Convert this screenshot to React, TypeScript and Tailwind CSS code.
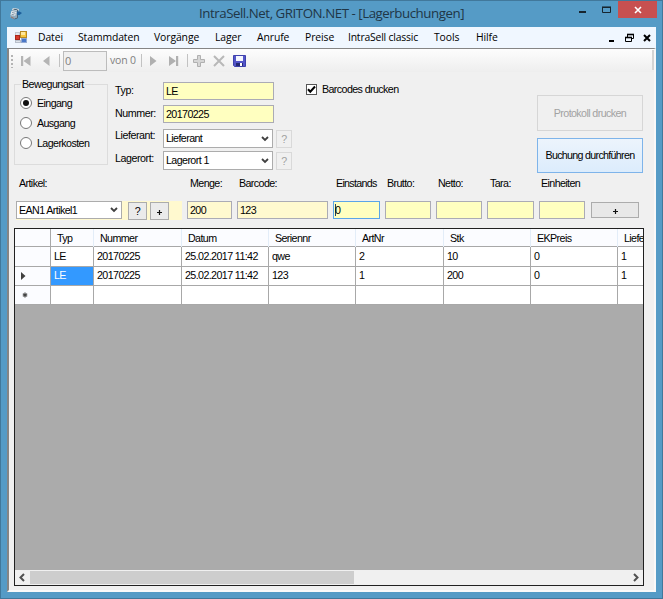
import type { ReactNode } from "react";

const MENU = [
  { label: "Datei", className: "w-[40px]" },
  { label: "Stammdaten", className: "w-[76px]" },
  { label: "Vorgänge", className: "w-[61px]" },
  { label: "Lager", className: "w-[42px]" },
  { label: "Anrufe", className: "w-[48px]" },
  { label: "Preise", className: "w-[43px]" },
  { label: "IntraSell classic", className: "w-[86px] tracking-[-0.2px]" },
  { label: "Tools", className: "w-[42px]" },
  { label: "Hilfe", className: "w-[40px]" },
];

const COLUMNS = ["Typ", "Nummer", "Datum", "Seriennr", "ArtNr", "Stk", "EKPreis", "Liefe"];

const ROWS = [
  ["LE", "20170225", "25.02.2017 11:42", "qwe", "2", "10", "0", "1"],
  ["LE", "20170225", "25.02.2017 11:42", "123", "1", "200", "0", "1"],
  ["", "", "", "", "", "", "", ""],
];

const GRID_COLS = "grid grid-cols-[36px_43px_88px_87px_87px_88px_87px_87px_26px]";

function AppIcon() {
  return (
    <svg width="14" height="14" viewBox="0 0 14 14" className="shrink-0">
      <path d="M4 2l6 1-1.500 9-4 1L1 11l1-5z" fill="#8fa9bb" />
      <path d="M4 2l6 1-1 2-6-1z" fill="#d9e2e8" />
      <path d="M2.500 5l5 1-1.500 4-4.500-1z" fill="#e9eef1" />
      <path d="M3 6.500l3.500.8M2.500 8.300l3 .7" stroke="#6b8294" strokeWidth="0.8" />
      <path d="M4.500 3.200l4 .6" stroke="#4c6375" strokeWidth="1" />
      <path d="M8.500 4v8l-3 1" fill="none" stroke="#4c6375" strokeWidth="1" />
      <path d="M8 5.500h2.500l2.500 1.500-2.500 2H8z" fill="#1e5f9a" />
      <path d="M2 11l3 1.500" stroke="#9c6f60" />
    </svg>
  );
}

function FormIcon() {
  return (
    <svg width="13" height="13" viewBox="0 0 13 13" className="shrink-0">
      <rect x="0.500" y="1.500" width="4" height="3" fill="#e3e6ec" stroke="#c3c8d2" />
      <rect x="5.500" y="0.500" width="6" height="6" fill="#f8c63c" stroke="#b98a20" />
      <rect x="6" y="1" width="4" height="3" fill="#ffe79b" />
      <rect x="0.500" y="4.500" width="4" height="4" fill="#d83b2c" stroke="#a9281c" />
      <rect x="6.500" y="7.500" width="5" height="4" fill="#4a78c8" stroke="#92a9d2" />
      <rect x="0.500" y="9.500" width="5" height="2" fill="#dfe3ea" stroke="#b7bfcb" />
    </svg>
  );
}

function Chevron() {
  return (
    <svg width="8" height="6" viewBox="0 0 8 6" className="shrink-0">
      <path d="M1 1l3 3 3-3" fill="none" stroke="#404040" strokeWidth="1.8" />
    </svg>
  );
}

function TitleBar() {
  return (
    <div className="flex h-[26px] shrink-0 items-start">
      <div className="w-[198px] pt-[5px] pl-[8px]">
        <AppIcon />
      </div>
      <div className="w-[370px] pt-[3px] font-['Open_Sans','Noto_Sans',sans-serif] text-[13.3px] leading-[19px] tracking-[-0.46px] whitespace-nowrap text-[#203646]">
        IntraSell.Net, GRITON.NET - [Lagerbuchungen]
      </div>
      <svg width="49" height="18" viewBox="0 0 49 18" className="shrink-0">
        <path d="M10 11h7" stroke="#17252f" strokeWidth="2" />
        <path d="M33.500 6.500h8v5h-8z" fill="none" stroke="#17252f" />
        <path d="M33 6.200h9" stroke="#17252f" strokeWidth="1.5" />
      </svg>
      <div className="flex h-[17px] w-[39px] items-center justify-center bg-[#c75050]">
        <svg width="8" height="8" viewBox="0 0 8 8">
          <path d="M1 1l6 6M7 1l-6 6" stroke="#fff" strokeWidth="1.6" />
        </svg>
      </div>
    </div>
  );
}

function MenuBar() {
  return (
    <div className="flex h-[21px] shrink-0 items-center bg-[#f0f7ff] pl-[8px] font-['Open_Sans','Noto_Sans',sans-serif] text-[10.4px] leading-[16px] tracking-[-0.1px] whitespace-nowrap text-black">
      <FormIcon />
      <div className="w-[10px]" />
      {MENU.map((item) => (
        <span key={item.label} className={`pb-[1px] ${item.className}`}>
          {item.label}
        </span>
      ))}
      <svg width="44" height="12" viewBox="0 0 44 12" className="ml-auto mr-[4px]">
        <path d="M1 9h5" stroke="#000" strokeWidth="2" />
        <path d="M19.500 5V2.500h6v4H24" fill="none" stroke="#000" />
        <path d="M19 2.500h7" stroke="#000" strokeWidth="1.600" />
        <path d="M17.500 5.500h6v4h-6z" fill="#f0f7ff" stroke="#000" />
        <path d="M17 5.500h7" stroke="#000" strokeWidth="1.600" />
        <path d="M36 3l6 6M42 3l-6 6" stroke="#000" strokeWidth="2" />
      </svg>
    </div>
  );
}

function Separator() {
  return <div className="h-[13px] w-px shrink-0 bg-[#c2c2c2]" />;
}

function Toolbar() {
  return (
    <div className="flex h-[23px] shrink-0 items-center bg-gradient-to-b from-[#fdfdfd] to-[#eeeeee] pl-[2px] font-['Open_Sans','Noto_Sans',sans-serif] text-[11px] text-[#808080]">
      <svg width="3" height="14" viewBox="0 0 3 14" className="shrink-0">
        <path d="M1 1v13" stroke="#b4b4b4" strokeWidth="2" strokeDasharray="2 2" />
      </svg>
      <svg width="45" height="12" viewBox="0 0 45 12" className="shrink-0" fill="#b4b4b4">
        <path d="M7 1h2.200v10H7zM16.500 1v10L9.500 6zM35.500 1v10L29 6z" />
      </svg>
      <Separator />
      <div className="ml-[3px] h-[20px] w-[44px] shrink-0 border border-[#bcbcbc] bg-[#f0f0f0] pl-[1px] leading-[17px]">0</div>
      <span className="mr-[5px] ml-[3px] w-[26px] shrink-0 text-[10.5px] tracking-[-0.2px] whitespace-nowrap">von 0</span>
      <Separator />
      <svg width="45" height="12" viewBox="0 0 45 12" className="shrink-0" fill="#b0b0b0">
        <path d="M8 1v10L14.500 6zM27 1v10L34 6zM34 1h2.200v10H34z" />
      </svg>
      <Separator />
      <svg width="62" height="14" viewBox="0 0 62 14" className="ml-[1px] shrink-0">
        <path d="M8.500 1.500h3v4h4v3h-4v4h-3v-4h-4v-3h4z" fill="#d6d6d6" stroke="#b0b0b0" />
        <path d="M25 2l10 10M35 2L25 12" stroke="#b8b8b8" strokeWidth="2" />
        <path d="M44.500 1.500h12v11h-11l-1-1z" fill="#5355c8" stroke="#3e41ac" />
        <path d="M47 2h7v5h-7z" fill="#f4f6ff" />
        <path d="M47 9h7v3h-7z" fill="#252a72" />
        <path d="M51 9h2v3h-2z" fill="#fff" />
      </svg>
      <div className="mb-[2px] ml-auto h-[20px] w-[2px] bg-[#d4d4d4]" />
    </div>
  );
}

function Radio({ label, checked = false }: { label: string; checked?: boolean }) {
  return (
    <div className="flex h-[20px] items-center gap-[5px]">
      <div className="flex size-[12px] items-center justify-center rounded-full border border-[#777] bg-white">
        {checked && <div className="size-[6px] rounded-full bg-[#111]" />}
      </div>
      <span>{label}</span>
    </div>
  );
}

function Combo({ value, className }: { value: string; className: string }) {
  return (
    <div className={`flex shrink-0 items-center justify-between border border-[#acacac] bg-white pr-[3px] pl-[2px] ${className}`}>
      <span>{value}</span>
      <Chevron />
    </div>
  );
}

function TextBox({ value = "", className }: { value?: string; className: string }) {
  return (
    <div className={`h-[18px] shrink-0 border px-[2px] leading-[16px] ${className}`}>{value}</div>
  );
}

function Button({ children, className }: { children: ReactNode; className: string }) {
  return (
    <div className={`flex shrink-0 items-center justify-center border ${className}`}>{children}</div>
  );
}

function Plus() {
  return (
    <svg width="5" height="5" viewBox="0 0 5 5" className="mt-[2px]">
      <path d="M0 2.500h5M2.500 0v5" stroke="#111" strokeWidth="1.200" />
    </svg>
  );
}

function BookingForm() {
  return (
    <div className="flex h-[104px] shrink-0 pl-[5px]">
      <fieldset className="mt-[6px] h-[87px] w-[94px] shrink-0 border border-[#dcdcdc] pl-[5px]">
        <legend className="ml-[1px] px-px leading-[12px] tracking-[-0.55px]">Bewegungsart</legend>
        <div className="pt-[3px]">
          <Radio label="Eingang" checked />
          <Radio label="Ausgang" />
          <Radio label="Lagerkosten" />
        </div>
      </fieldset>

      <div className="ml-[7px] w-[48px] pt-[7px] tracking-[-0.45px]">
        <div className="h-[23px] leading-[22px]">Typ:</div>
        <div className="h-[22px] leading-[22px]">Nummer:</div>
        <div className="h-[23px] leading-[22px]">Lieferant:</div>
        <div className="h-[22px] leading-[22px]">Lagerort:</div>
      </div>

      <div className="w-[130px] shrink-0 pt-[10px]">
        <TextBox value="LE" className="mb-[5px] w-[111px] border-[#ababb5] bg-[#ffffc0]" />
        <TextBox value="20170225" className="mb-[6px] w-[111px] border-[#ababb5] bg-[#ffffc0]" />
        <div className="mb-[3px] flex gap-[3px]">
          <Combo value="Lieferant" className="h-[19px] w-[110px]" />
          <Button className="mt-px h-[18px] w-[16px] border-[#d9d9d9] text-[#a0a0a0]">?</Button>
        </div>
        <div className="flex gap-[3px]">
          <Combo value="Lagerort 1" className="h-[19px] w-[110px]" />
          <Button className="mt-px h-[18px] w-[16px] border-[#d9d9d9] text-[#a0a0a0]">?</Button>
        </div>
      </div>

      <div className="mt-[11px] ml-[13px] flex h-[12px] items-center gap-[5px]">
        <div className="flex size-[11px] items-center justify-center border border-[#555] bg-white">
          <svg width="9" height="9" viewBox="0 0 9 9">
            <path d="M1 4.200l2.300 2.500L8 1.500" fill="none" stroke="#000" strokeWidth="2" />
          </svg>
        </div>
        <span>Barcodes drucken</span>
      </div>

      <div className="mr-[11px] ml-auto flex flex-col gap-[7px] pt-[23px]">
        <Button className="h-[36px] w-[106px] border-[#d6d6d6] text-[#a2a2a2]">Protokoll drucken</Button>
        <Button className="h-[35px] w-[106px] border-[#7eb4ea] bg-gradient-to-b from-[#ecf4fc] to-[#dcecfc] tracking-[-0.7px]">
          Buchung durchführen
        </Button>
      </div>
    </div>
  );
}

function ArticleRow() {
  return (
    <>
      <div className="flex h-[25px] shrink-0 pl-[10px] leading-[15px]">
        <span className="w-[171px]">Artikel:</span>
        <span className="w-[49px]">Menge:</span>
        <span className="w-[97px]">Barcode:</span>
        <span className="w-[51px] tracking-[-0.7px]">Einstands</span>
        <span className="w-[51px]">Brutto:</span>
        <span className="w-[52px]">Netto:</span>
        <span className="w-[51px]">Tara:</span>
        <span>Einheiten</span>
      </div>
      <div className="flex h-[27px] shrink-0 pl-[7px]">
        <div className="flex h-[19px] w-[166px] shrink-0 bg-[#fff9cf]">
          <Combo value="EAN1 Artikel1" className="h-[18px] w-[106px]" />
          <Button className="mt-px ml-[6px] h-[18px] w-[19px] border-[#acacac] bg-[#ebebeb]">?</Button>
          <Button className="mt-px ml-[3px] h-[18px] w-[19px] border-[#acacac] bg-[#ebebeb]">
            <Plus />
          </Button>
        </div>
        <div className="ml-[5px] flex gap-[5px]">
          <TextBox value="200" className="w-[45px] border-[#ababb5] bg-[#fff9cf]" />
          <TextBox value="123" className="w-[91px] border-[#ababb5] bg-[#fff9cf]" />
          <div className="flex h-[18px] w-[47px] items-center border border-[#5ba5e8] bg-[#ffffc0] pl-[1px]">
            <div className="h-[12px] w-px bg-[#17456e]" />
            <span className="-ml-px leading-[16px]">0</span>
          </div>
          <TextBox className="w-[46px] border-[#ababb5] bg-[#ffffc0]" />
          <TextBox className="w-[46px] border-[#ababb5] bg-[#ffffc0]" />
          <TextBox className="w-[47px] border-[#ababb5] bg-[#ffffc0]" />
          <TextBox className="w-[46px] border-[#ababb5] bg-[#ffffc0]" />
        </div>
        <Button className="mt-px ml-[6px] h-[16px] w-[48px] border-[#acacac] bg-[#e8e8e8]">
          <Plus />
        </Button>
      </div>
    </>
  );
}

function DataGrid() {
  return (
    <div className="mr-[10px] mb-[4px] ml-[5px] flex min-h-0 flex-1 flex-col overflow-hidden border border-[#202020] bg-[#ababab]">
      <div className={`${GRID_COLS} h-[18px] shrink-0 border-b border-[#a8a8a8] bg-[#fbfcff]`}>
        <div className="border-r border-[#a8a8a8]" />
        {COLUMNS.map((name) => (
          <div key={name} className="border-r border-[#e3edf8] pl-[6px] leading-[18px] whitespace-nowrap last:border-r-0 last:tracking-[-0.6px]">
            {name}
          </div>
        ))}
      </div>
      {ROWS.map((row, r) => (
        <div key={r} className={`${GRID_COLS} ${r === 0 ? "h-[20px]" : "h-[19px]"} shrink-0 border-b border-[#a8a8a8] bg-white`}>
          <div className="flex items-center border-r border-[#a8a8a8] bg-[#fbfcff] pl-[6px]">
            {r === 1 && (
              <svg width="5" height="8" viewBox="0 0 5 8">
                <path d="M0 0v8l4.500-4z" fill="#404040" />
              </svg>
            )}
            {r === 2 && (
              <svg width="8" height="8" viewBox="0 0 8 8">
                <path d="M4 1.500v5M1.800 2.700l4.400 2.600M6.200 2.700L1.800 5.300" stroke="#444" strokeWidth="1.200" />
              </svg>
            )}
          </div>
          {row.map((cell, c) => (
            <div
              key={c}
              className={`border-r border-[#a8a8a8] pl-[3px] whitespace-nowrap last:border-r-0 ${
                r === 0 ? "leading-[19px]" : "leading-[17px]"
              } ${r === 1 && c === 0 ? "bg-[#3399ff] text-white" : ""}`}
            >
              {cell}
            </div>
          ))}
        </div>
      ))}
      <div className="mt-auto flex h-[15px] shrink-0 items-center bg-[#f0f0f0]">
        <svg width="15" height="15" viewBox="0 0 15 15">
          <path d="M9 4L5.500 7.500 9 11" fill="none" stroke="#505050" strokeWidth="2" />
        </svg>
        <div className="h-[13px] w-[324px] bg-[#cdcdcd]" />
        <svg width="15" height="15" viewBox="0 0 15 15" className="ml-auto">
          <path d="M6 4l3.500 3.500L6 11" fill="none" stroke="#505050" strokeWidth="2" />
        </svg>
      </div>
    </div>
  );
}

export default function App() {
  return (
    <div className="flex h-[599px] w-[663px] flex-col overflow-hidden border border-[#41789b] bg-[#559bc6] font-['Liberation_Sans',Arial,sans-serif] text-[10.7px] text-black">
      <TitleBar />
      <div className="mx-[6px] mb-[6px] flex min-h-0 flex-1 flex-col">
        <MenuBar />
        <div className="flex min-h-0 flex-1 flex-col border-t border-r-2 border-b-2 border-l-2 border-t-[#858585] border-r-[#f8f8f8] border-b-[#fafafa] border-l-[#858585] bg-[#f0f0f0] tracking-[-0.6px]">
          <Toolbar />
          <BookingForm />
          <ArticleRow />
          <DataGrid />
        </div>
      </div>
    </div>
  );
}
